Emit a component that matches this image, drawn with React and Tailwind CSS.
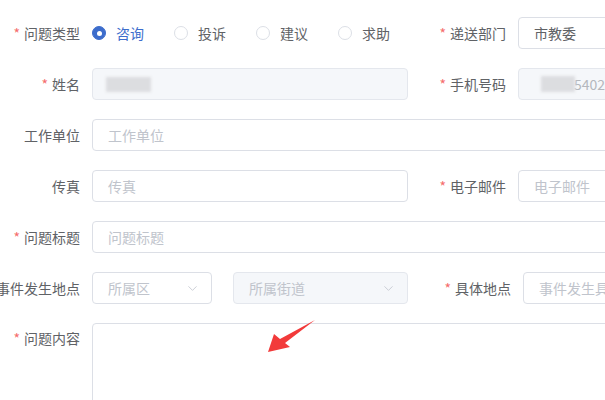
import { ChevronDown } from 'lucide-react'

const FONT = { fontFamily: '"Noto Sans CJK SC", "Noto Sans", sans-serif' }

function Label({ text, required, width = 'w-[80px]' }) {
  return (
    <div className={`${width} shrink-0 mr-[12px] flex justify-end items-center whitespace-nowrap text-[14px] text-[#606266]`}>
      {required && <span className="text-[#f56c6c] mr-[4px]">*</span>}
      <span>{text}</span>
    </div>
  )
}

function Input({ placeholder, value, disabled, className = '', children }) {
  return (
    <div
      className={`h-[32px] shrink-0 rounded-[4px] border flex items-center px-[15px] text-[14px] overflow-hidden whitespace-nowrap ${
        disabled ? 'bg-[#f5f7fa] border-[#e4e7ed]' : 'bg-white border-[#dcdfe6]'
      } ${className}`}
    >
      {children ? children : value ? <span className="text-[#606266]">{value}</span> : <span className="text-[#c0c4cc]">{placeholder}</span>}
    </div>
  )
}

function Select({ placeholder, disabled, className }) {
  return (
    <div
      className={`h-[32px] shrink-0 rounded-[4px] border flex items-center justify-between pl-[15px] pr-[11px] text-[14px] whitespace-nowrap ${
        disabled ? 'bg-[#f5f7fa] border-[#e4e7ed]' : 'bg-white border-[#dcdfe6]'
      } ${className}`}
    >
      <span className="text-[#c0c4cc]">{placeholder}</span>
      <ChevronDown size={15} strokeWidth={1.3} className="text-[#c0c4cc]" />
    </div>
  )
}

function Radio({ label, checked }) {
  return (
    <div className="flex items-center shrink-0 whitespace-nowrap mr-[30px]">
      <span
        className={`w-[14px] h-[14px] shrink-0 rounded-full border flex items-center justify-center ${
          checked ? 'bg-[#3d6dcc] border-[#3d6dcc]' : 'bg-white border-[#dcdfe6]'
        }`}
      >
        {checked && <span className="w-[5px] h-[5px] rounded-full bg-white" />}
      </span>
      <span className={`ml-[10px] text-[14px] ${checked ? 'text-[#3d6dcc]' : 'text-[#606266]'}`}>{label}</span>
    </div>
  )
}

export default function App() {
  return (
    <div className="relative w-[605px] h-[400px] overflow-hidden bg-white" style={FONT}>
      <div className="w-[900px] flex flex-col gap-[19px] pt-[17px]">
        {/* 问题类型 / 递送部门 */}
        <div className="flex h-[32px]">
          <Label text="问题类型" required />
          <div className="w-[316px] shrink-0 flex items-center">
            <Radio label="咨询" checked />
            <Radio label="投诉" />
            <Radio label="建议" />
            <Radio label="求助" />
          </div>
          <Label text="递送部门" required width="w-[98px]" />
          <Input value="市教委" className="w-[200px]" />
        </div>

        {/* 姓名 / 手机号码 */}
        <div className="flex h-[32px]">
          <Label text="姓名" required />
          <Input disabled className="w-[316px] pl-[13px]">
            <span className="w-[45px] h-[15px] bg-[#dcdde0] blur-[1.5px]" />
          </Input>
          <Label text="手机号码" required width="w-[98px]" />
          <Input disabled className="w-[200px] pl-[22px]">
            <span className="w-[34px] h-[16px] bg-[#dcdde0] blur-[1.5px]" />
            <span className="text-[#b4b7bd] -ml-[1px]">5402</span>
          </Input>
        </div>

        {/* 工作单位 */}
        <div className="flex h-[32px]">
          <Label text="工作单位" />
          <Input placeholder="工作单位" className="w-[700px]" />
        </div>

        {/* 传真 / 电子邮件 */}
        <div className="flex h-[32px]">
          <Label text="传真" />
          <Input placeholder="传真" className="w-[316px]" />
          <Label text="电子邮件" required width="w-[98px]" />
          <Input placeholder="电子邮件" className="w-[200px]" />
        </div>

        {/* 问题标题 */}
        <div className="flex h-[32px]">
          <Label text="问题标题" required />
          <Input placeholder="问题标题" className="w-[700px]" />
        </div>

        {/* 事件发生地点 / 具体地点 */}
        <div className="flex h-[32px]">
          <Label text="事件发生地点" />
          <Select placeholder="所属区" className="w-[120px]" />
          <Select placeholder="所属街道" disabled className="w-[175px] ml-[21px]" />
          <Label text="具体地点" required width="w-[103px]" />
          <Input placeholder="事件发生具体地点" className="w-[200px]" />
        </div>

        {/* 问题内容 */}
        <div className="flex">
          <div className="w-[80px] shrink-0 mr-[12px] flex justify-end items-start pt-[5px] whitespace-nowrap text-[14px] text-[#606266]">
            <span className="text-[#f56c6c] mr-[4px]">*</span>
            <span>问题内容</span>
          </div>
          <div className="w-[700px] h-[120px] shrink-0 rounded-[4px] border border-[#dcdfe6] bg-white" />
        </div>
      </div>

      {/* annotation arrow */}
      <svg className="absolute inset-0 pointer-events-none" width="605" height="400" viewBox="0 0 605 400">
        <polygon points="268,352 274,334 280,339 315,320 285,343 290,347" fill="#f23a3a" />
      </svg>
    </div>
  )
}
